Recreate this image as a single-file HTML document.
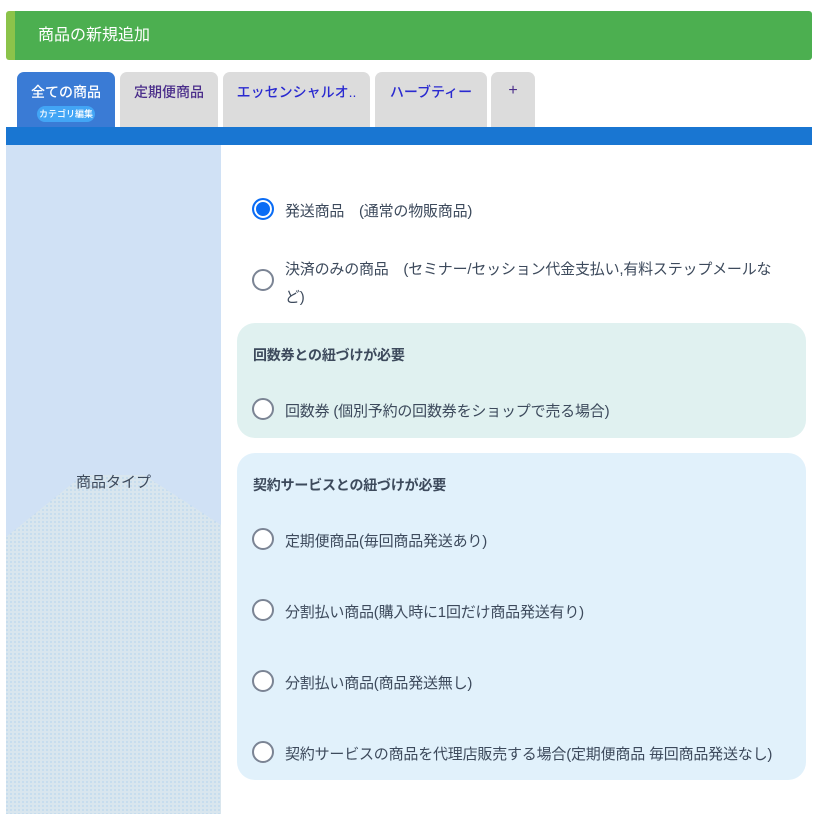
<!DOCTYPE html>
<html><head><meta charset="utf-8"><style>
*{margin:0;padding:0;box-sizing:border-box}
body{width:814px;height:814px;background:#fff;font-family:"Liberation Sans","Noto Sans CJK JP",sans-serif;position:relative;overflow:hidden;color:#3d4a5c}
.hdr{position:absolute;left:6px;top:11px;width:806px;height:49px;background:#4caf50;border-left:9px solid #8bc34a;border-radius:3px;color:#fff;font-size:16px;line-height:49px;padding-left:23px}
.tab{position:absolute;top:72px;height:55px;background:#dcdcdc;border-radius:7px 7px 0 0;font-size:14px;text-align:center;padding-top:10px;color:#4a2d8a;font-weight:500}
.bar{position:absolute;left:6px;top:127px;width:806px;height:18px;background:#1976d2}
.side{position:absolute;left:6px;top:145px;width:215px;height:669px;background:#d0e1f5;overflow:hidden}
.r{position:absolute;width:22px;height:22px;border:2px solid #7b8494;border-radius:50%;background:#fff}
.t{position:absolute;font-size:15px;color:#3d4a5c;letter-spacing:-0.2px}
.box{position:absolute;border-radius:18px}
</style></head><body>
<div class="hdr">商品の新規追加</div>
<div class="tab" style="left:17px;width:98px;background:#3a7bd5;color:#fff">全ての商品<div style="margin:4px auto 0;width:58px;height:16px;border-radius:8px;background:#42a5f5;font-size:9px;line-height:16px">カテゴリ編集</div></div>
<div class="tab" style="left:120px;width:98px">定期便商品</div>
<div class="tab" style="left:223px;width:147px;color:#2a2ad0">エッセンシャルオ..</div>
<div class="tab" style="left:375px;width:112px;color:#2a2ad0">ハーブティー</div>
<div class="tab" style="left:491px;width:44px;font-size:16px">+</div>
<div class="bar"></div>
<div class="side">
<svg width="215" height="669" style="position:absolute;left:0;top:0"><defs><pattern id="p" width="4" height="4" patternUnits="userSpaceOnUse"><rect width="4" height="4" fill="#d9e6ee"/><circle cx="1" cy="1" r="0.6" fill="#9cc7ef"/></pattern></defs><polygon points="0,392 77,330 138,330 215,380 215,669 0,669" fill="url(#p)"/></svg>
<div style="position:absolute;left:0;width:215px;top:326px;text-align:center;font-size:15px">商品タイプ</div>
</div>
<div class="r" style="left:252px;top:198px;border:2px solid #0a6cf5;background:#0a6cf5;box-shadow:inset 0 0 0 2px #fff"></div>
<div class="t" style="left:285px;top:200px">発送商品　(通常の物販商品)</div>
<div class="r" style="left:252px;top:269px"></div>
<div class="t" style="left:285px;top:256px;width:500px;line-height:28px">決済のみの商品　(セミナー/セッション代金支払い,有料ステップメールなど)</div>
<div class="box" style="left:237px;top:323px;width:569px;height:115px;background:#e0f1f0"></div>
<div class="t" style="left:253px;top:345px;font-weight:bold;font-size:14px">回数券との紐づけが必要</div>
<div class="r" style="left:252px;top:398px"></div>
<div class="t" style="left:285px;top:400px">回数券 (個別予約の回数券をショップで売る場合)</div>
<div class="box" style="left:237px;top:453px;width:569px;height:327px;background:#e1f1fb"></div>
<div class="t" style="left:253px;top:475px;font-weight:bold;font-size:14px">契約サービスとの紐づけが必要</div>
<div class="r" style="left:252px;top:528px"></div>
<div class="t" style="left:285px;top:530px">定期便商品(毎回商品発送あり)</div>
<div class="r" style="left:252px;top:599px"></div>
<div class="t" style="left:285px;top:601px">分割払い商品(購入時に1回だけ商品発送有り)</div>
<div class="r" style="left:252px;top:670px"></div>
<div class="t" style="left:285px;top:672px">分割払い商品(商品発送無し)</div>
<div class="r" style="left:252px;top:741px"></div>
<div class="t" style="left:285px;top:743px">契約サービスの商品を代理店販売する場合(定期便商品 毎回商品発送なし)</div>
</body></html>
